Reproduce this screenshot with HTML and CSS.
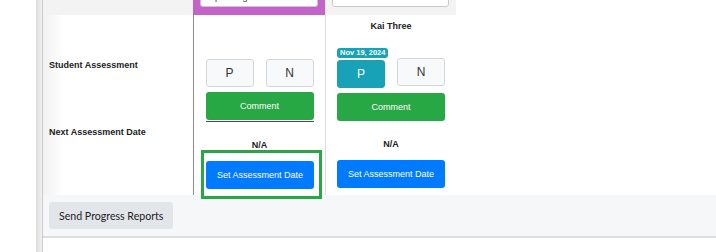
FILE: index.html
```html
<!DOCTYPE html>
<html lang="en">
<head>
<meta charset="utf-8">
<title>Progress</title>
<link rel="stylesheet" href="styles.css">
</head>
<body>
<div class="page">
  <div class="gutter"></div>
  <div class="edge"></div>
  <main class="content">
    <div class="grid">
      <div class="hcell hlabel"></div>
      <div class="hcell hsel"><div class="select"><span>Operating</span></div></div>
      <div class="hcell"><div class="select"></div></div>

      <div class="labels">
        <div class="label l1">Student Assessment</div>
        <div class="label l2">Next Assessment Date</div>
      </div>

      <div class="col col1">
        <div class="name">&nbsp;</div>
        <div class="actions">
          <button class="pn">P</button>
          <button class="pn">N</button>
        </div>
        <div class="comment-wrap"><button class="comment">Comment</button></div>
        <div class="na">N/A</div>
        <div class="focus-box"><button class="set-btn">Set Assessment Date</button></div>
      </div>

      <div class="col col2">
        <div class="name">Kai Three</div>
        <div class="actions">
          <div class="pwrap">
            <span class="badge">Nov 19, 2024</span>
            <button class="pn active">P</button>
          </div>
          <button class="pn n-btn">N</button>
        </div>
        <button class="comment">Comment</button>
        <div class="na">N/A</div>
        <button class="set-btn">Set Assessment Date</button>
      </div>
    </div>
    <footer class="footer">
      <button class="send">Send Progress Reports</button>
    </footer>
  </main>
</div>
</body>
</html>
```
FILE: styles.css
```css
* { box-sizing: border-box; }
html, body { margin: 0; padding: 0; background: #fff; }
body { font-family: "Liberation Sans", Arial, sans-serif; color: #222; }

.page { display: flex; height: 252px; overflow: hidden; }
.gutter { width: 36px; flex: none; }
.edge {
  width: 7px; flex: none;
  background: linear-gradient(to right, #dcdcdc, #eaeaea 60%, #f0f0f0);
  border-right: 1px solid #cccccc;
}
.content { flex: 1; display: flex; flex-direction: column; min-width: 0; }

.grid {
  display: grid;
  grid-template-columns: 150px 132px 131px;
  grid-template-rows: 15px 180px;
}
.hcell { background: #f3f3f3; }
.hsel { background: #c363c7; }
.select {
  height: 20px;
  margin: -13px 7px 0 7px;
  background: #fff;
  border: 1px solid #c9c9c9;
  border-radius: 3px;
  font-size: 9px;
  line-height: 18px;
  padding-left: 7px;
  color: #333;
  overflow: hidden;
}

.labels {
  display: flex; flex-direction: column;
  padding-left: 6px;
  background: linear-gradient(to right, #f1f1f1, #ffffff 20px);
}
.label { font-size: 9px; line-height: 11px; font-weight: bold; color: #222; }
.l1 { margin-top: 45px; }
.l2 { margin-top: 56px; }

.col {
  display: flex; flex-direction: column; align-items: center;
  font-size: 9px;
}
.col1 { border-left: 1px solid #8c8c8c; }
.col2 { border-left: 1px solid #dddddd; }

.name { margin-top: 6px; height: 11px; line-height: 11px; font-weight: bold; color: #222; }

.actions { display: flex; gap: 12px; align-items: flex-start; }
.col1 .actions { margin-top: 27px; }
.col2 .actions { margin-top: 16px; }

button { font-family: "Liberation Sans", Arial, sans-serif; padding: 0; margin: 0; cursor: pointer; }

.pn {
  width: 48px; height: 28px;
  border: 1px solid #d4d6d8; border-radius: 3px;
  background: #f8f9fa; color: #333;
  font-size: 12px;
}
.pn.active { background: #17a2b8; border-color: #17a2b8; color: #fff; }
.pwrap { display: flex; flex-direction: column; align-items: flex-start; width: 48px; }
.pwrap .pn { margin-top: 2px; }
.badge {
  height: 10px; line-height: 10px;
  padding: 0 3px;
  background: #17a2b8; color: #fff;
  font-size: 7.5px; font-weight: bold;
  border-radius: 3px; white-space: nowrap;
}
.n-btn { margin-top: 10px; }

.comment {
  width: 108px; height: 28px;
  background: #28a745; color: #fff;
  border: none; border-radius: 3px;
  font-size: 9px;
}
.comment-wrap { margin-top: 5px; padding-bottom: 1px; border-bottom: 1px solid #4a4a4a; display: flex; }
.col2 .comment { margin-top: 5px; }

.na { margin-top: 18px; line-height: 10px; font-weight: bold; color: #222; }

.set-btn {
  width: 108px; height: 28px;
  background: #007bff; color: #fff;
  border: none; border-radius: 3px;
  font-size: 9px;
}
.col2 .set-btn { margin-top: 11px; }
.focus-box {
  align-self: flex-start;
  margin: 3px 0 0 10px;
  padding: 8px 5px 7px 2px;
  outline: 3px solid #28a745;
  position: relative; z-index: 1;
  display: flex;
}

.footer {
  height: 43px;
  background: #f6f7f9;
  border-bottom: 2px solid #dcdee2;
  padding: 7px 6px;
}
.send {
  height: 27px;
  padding: 0 10px;
  background: #e2e5ea; color: #222;
  border: none; border-radius: 3px;
  font-family: Lato, "Liberation Sans", sans-serif;
  font-size: 10.6px;
}
```
